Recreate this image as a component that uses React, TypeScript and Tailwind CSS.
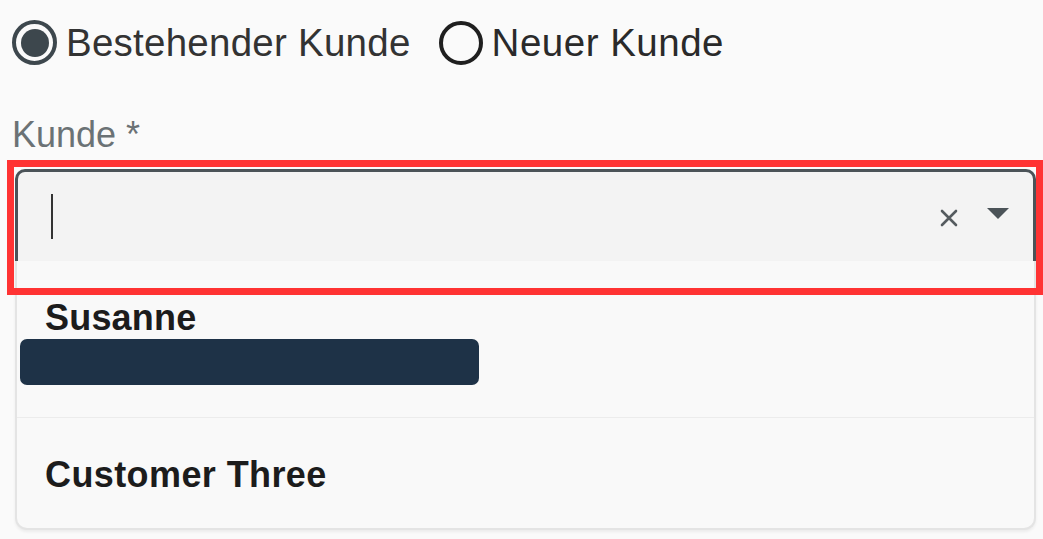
import React from "react";

export default function App() {
  return (
    <div className="relative min-h-screen w-full bg-[#fafafa] font-['Liberation_Sans',Arial,sans-serif]">
      <div className="pl-[12px] pr-[4px] pt-[20px]">
        {/* Radio row */}
        <div className="flex items-center">
          <div className="flex items-center">
            <div className="flex h-[45px] w-[45px] items-center justify-center rounded-full border-[4px] border-[#3d474d]">
              <div className="h-[28px] w-[28px] rounded-full bg-[#3d474d]" />
            </div>
            <span className="ml-[9px] text-[38.5px] leading-[44px] tracking-[0.25px] text-[#333333]">Bestehender Kunde</span>
          </div>
          <div className="ml-[28px] flex items-center">
            <div className="h-[44px] w-[44px] rounded-full border-[4px] border-[#1f1f1f]" />
            <span className="ml-[9px] text-[38.5px] leading-[44px] tracking-[0.5px] text-[#2a2a2a]">Neuer Kunde</span>
          </div>
        </div>

        {/* Label */}
        <div className="mt-[48px] text-[36px] leading-[43px] text-[#6b7275]">Kunde *</div>

        {/* Combobox */}
        <div className="mt-[13px] w-[1024px] pl-[3px]">
          <div className="flex h-[92px] items-center rounded-t-[10px] border-x-[3px] border-t-[3px] border-[#4b5358] bg-[#f3f3f3] pl-[33px] pr-[24px]">
            <span className="h-[45px] w-[2px] bg-[#333333]" />
            <div className="flex-1" />
            <svg width="20" height="20" viewBox="0 0 20 20" className="mt-[3px]">
              <path d="M3 3 L17 17 M17 3 L3 17" stroke="#555b5f" strokeWidth="2.6" strokeLinecap="round" />
            </svg>
            <svg width="22" height="12" viewBox="0 0 22 12" className="ml-[28px] -mt-[5px]">
              <path d="M0 0 H22 L11 11 Z" fill="#4b5358" />
            </svg>
          </div>
          <div className="rounded-b-[12px] border-x-[2px] border-b-[2px] border-[#e4e4e4] bg-[#f9f9f9] shadow-[0_2px_3px_rgba(0,0,0,0.06)]">
            <div className="border-b border-[#ececec] pl-[28px] pt-[35px] pb-[32px]">
              <div className="text-[36px] font-bold leading-[43px] tracking-[0.2px] text-[#1c1c1c]">Susanne</div>
              <div className="-ml-[25px] h-[46px] w-[459px] rounded-[7px] bg-[#1e3247]" />
            </div>
            <div className="pl-[28px] pt-[35px] pb-[32px]">
              <div className="text-[36px] font-bold leading-[43px] tracking-[0.4px] text-[#1c1c1c]">Customer Three</div>
            </div>
          </div>
        </div>
      </div>

      {/* Red annotation box */}
      <div className="pointer-events-none absolute left-[7px] top-[160px] h-[135px] w-[1036px] border-[7px] border-[#ff3333]" />
    </div>
  );
}
